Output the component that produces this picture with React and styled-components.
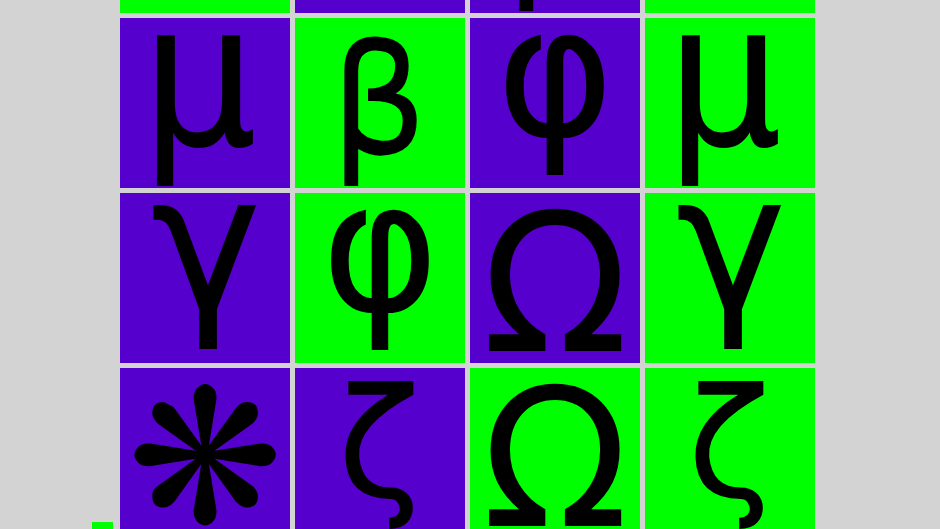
import styled, { createGlobalStyle } from "styled-components";

const GlobalStyle = createGlobalStyle`
  html, body {
    margin: 0;
    padding: 0;
    background: #d3d3d3;
    overflow: hidden;
  }
`;

const PURPLE = "#5500cc";
const GREEN = "#00ff00";
const CELL = 170;
const MONO = `"DejaVu Sans Mono", "DejaVu Sans", monospace`;
const SANS = `"DejaVu Sans", sans-serif`;

// each glyph is scaled to fill the card: size in px, baseline from card top,
// shift = horizontal nudge of the ink centre
const GLYPHS = {
  "μ": { size: 199, base: 127, shift: -7, font: MONO },
  "β": { size: 153, base: 136, shift: -1, font: MONO },
  "φ": { size: 185, base: 118, shift: 0, font: MONO },
  "γ": { size: 191, base: 117, shift: 3, font: MONO },
  "Ω": { size: 192, base: 158, shift: 0, font: SANS },
  "ζ": { size: 153, base: 129, shift: 0, font: MONO },
  "❋": { size: 187, base: 155, shift: 0, font: SANS },
};

const Page = styled.div`
  display: flex;
  align-items: flex-end;
  padding-left: 92px;
  margin-top: -157px;
`;

const Marker = styled.div`
  width: 21px;
  height: 16px;
  margin-right: 7px;
  background: ${GREEN};
`;

const Board = styled.div`
  display: grid;
  grid-template-columns: repeat(4, ${CELL}px);
  grid-auto-rows: ${CELL}px;
  gap: 5px;
`;

const Card = styled.div`
  background: ${(p) => (p.$tone === "green" ? GREEN : PURPLE)};
  overflow: hidden;
`;

const Glyph = styled.div`
  height: ${CELL}px;
  padding: 0 ${(p) => Math.max(0, -2 * p.$shift)}px 0
    ${(p) => Math.max(0, 2 * p.$shift)}px;
  color: #000;
  font-family: ${(p) => p.$font};
  font-size: ${(p) => p.$size}px;
  line-height: ${(p) => 2 * (p.$base - 0.346 * p.$size)}px;
  text-align: center;
  white-space: nowrap;
`;

const cards = [
  ["γ", "green"],
  ["γ", "purple"],
  ["β", "purple"],
  ["φ", "green"],
  ["μ", "purple"],
  ["β", "green"],
  ["φ", "purple"],
  ["μ", "green"],
  ["γ", "purple"],
  ["φ", "green"],
  ["Ω", "purple"],
  ["γ", "green"],
  ["❋", "purple"],
  ["ζ", "purple"],
  ["Ω", "green"],
  ["ζ", "green"],
];

export default function App() {
  return (
    <>
      <GlobalStyle />
      <Page>
        <Marker />
        <Board>
          {cards.map(([glyph, tone], i) => {
            const g = GLYPHS[glyph];
            return (
              <Card key={i} $tone={tone}>
                <Glyph
                  $size={g.size}
                  $base={g.base}
                  $shift={g.shift}
                  $font={g.font}
                >
                  {glyph}
                </Glyph>
              </Card>
            );
          })}
        </Board>
      </Page>
    </>
  );
}
